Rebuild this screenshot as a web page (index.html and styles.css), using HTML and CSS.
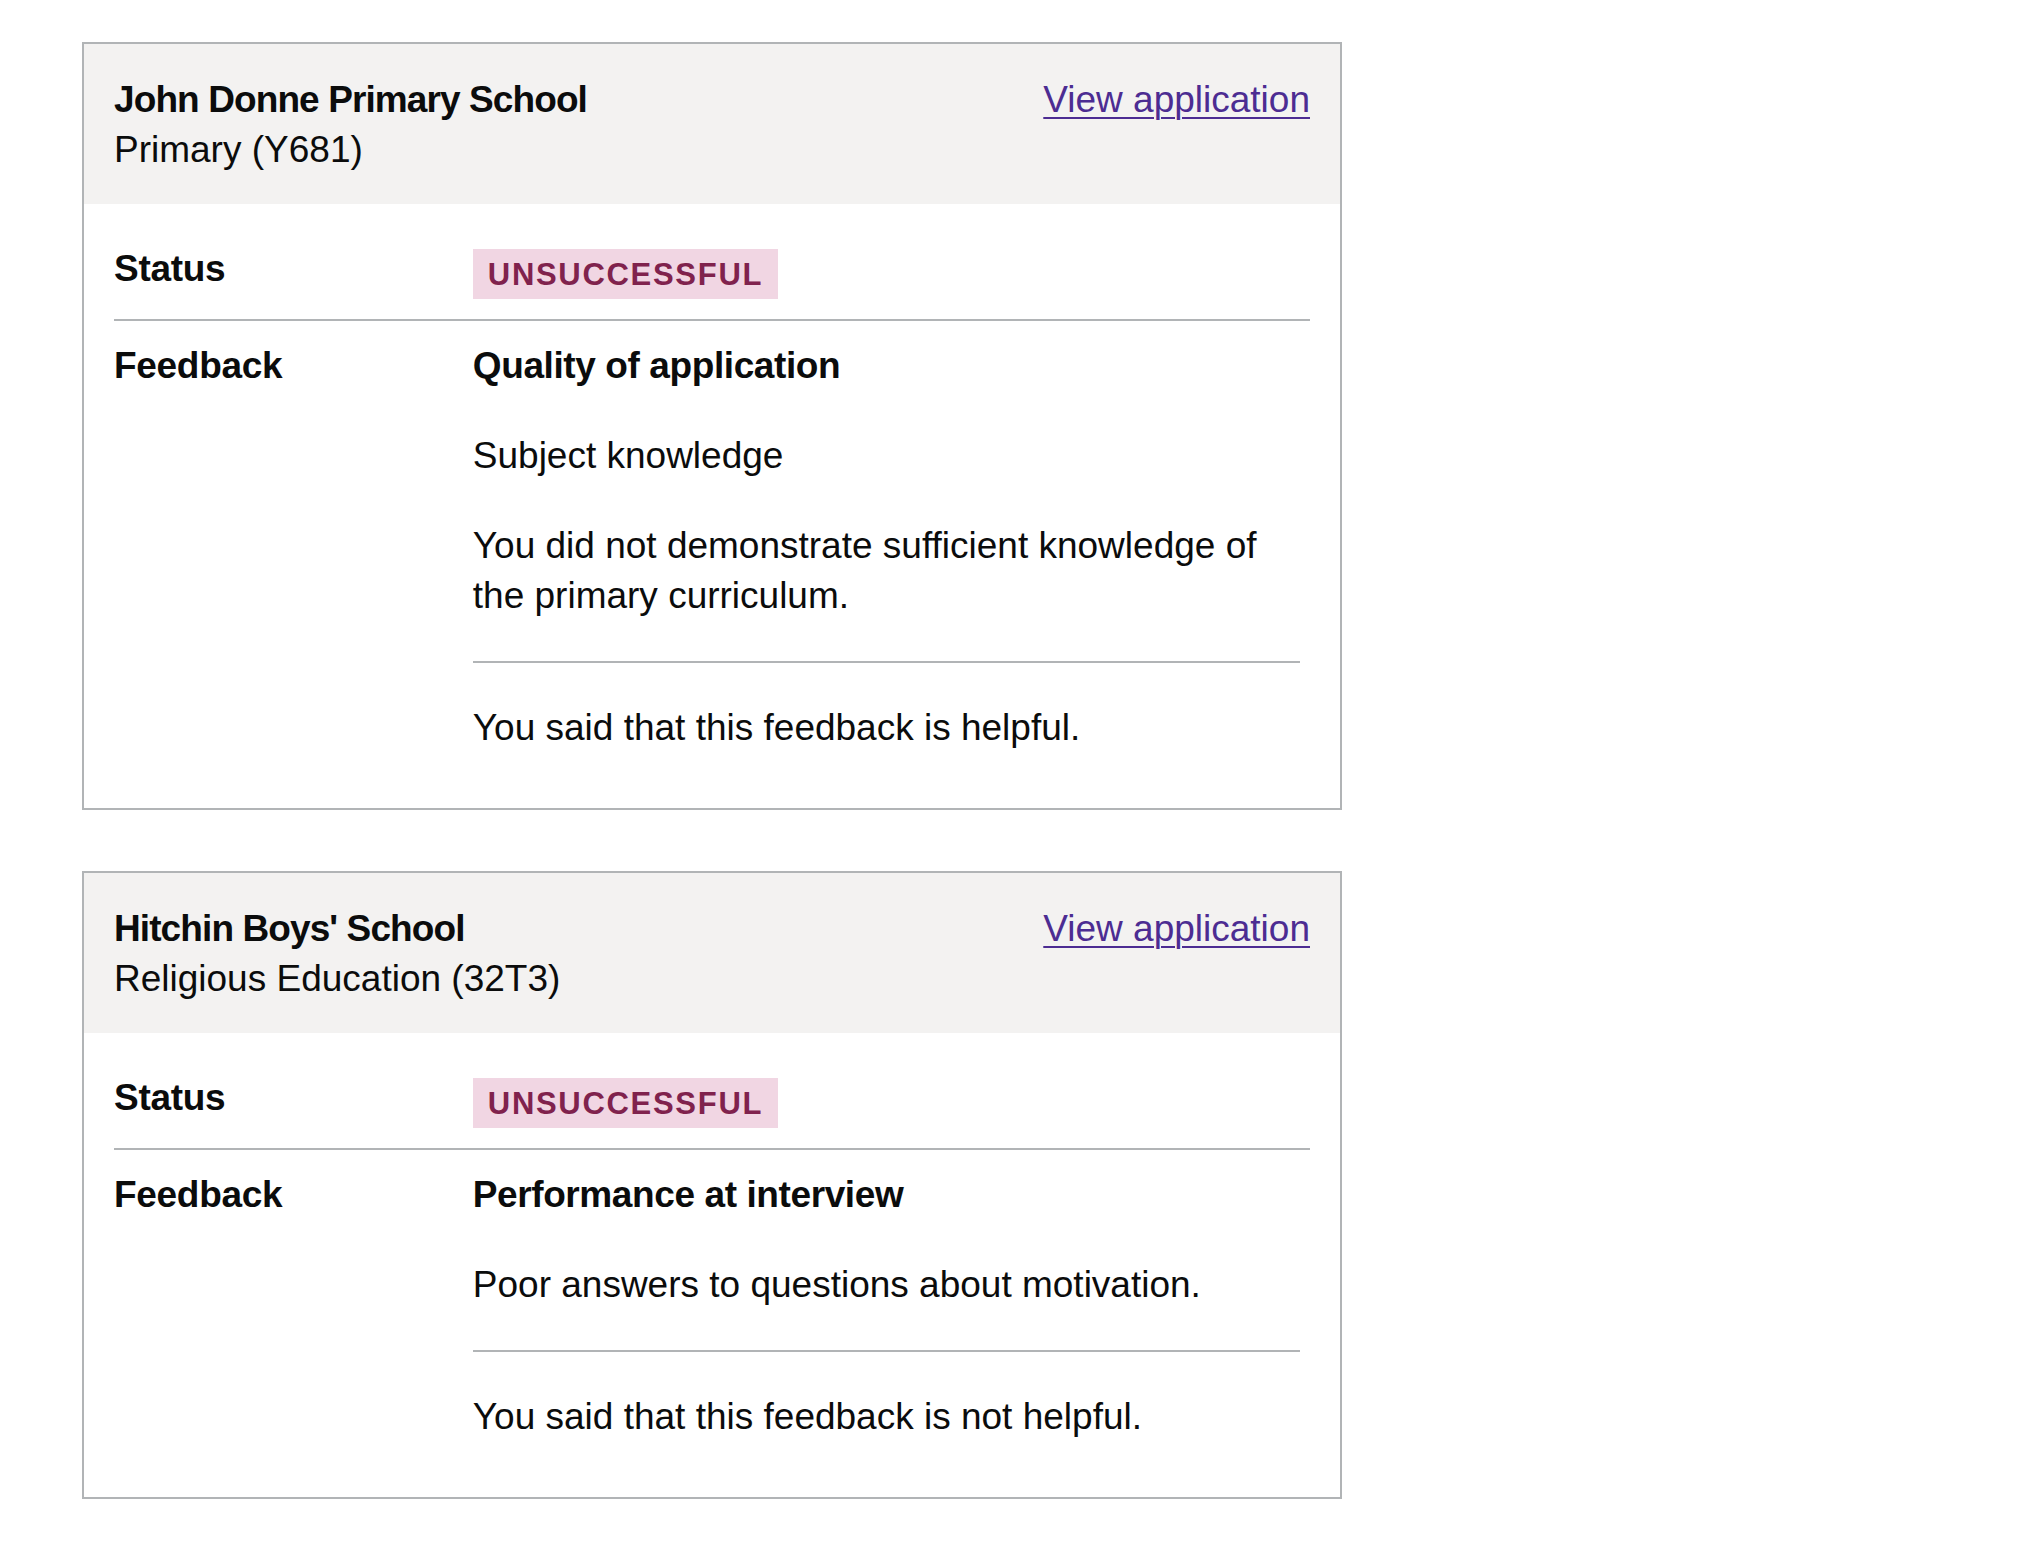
FILE: index.html
```html
<!DOCTYPE html>
<html lang="en">
<head>
<meta charset="utf-8">
<title>Application feedback</title>
<link rel="stylesheet" href="styles.css">
</head>
<body>
<main class="page">
  <section class="card">
    <header class="card-header">
      <div class="card-title-group">
        <h2 class="card-title">John Donne Primary School</h2>
        <p class="card-subtitle">Primary (Y681)</p>
      </div>
      <a class="card-link" href="#">View application</a>
    </header>
    <div class="card-content">
      <dl class="summary">
        <div class="summary-row">
          <dt class="summary-key">Status</dt>
          <dd class="summary-value"><strong class="tag">Unsuccessful</strong></dd>
        </div>
        <div class="summary-row">
          <dt class="summary-key">Feedback</dt>
          <dd class="summary-value">
            <p class="text text-bold">Quality of application</p>
            <p class="text">Subject knowledge</p>
            <p class="text">You did not demonstrate sufficient knowledge of the primary curriculum.</p>
            <hr class="break">
            <p class="text">You said that this feedback is helpful.</p>
          </dd>
        </div>
      </dl>
    </div>
  </section>

  <section class="card">
    <header class="card-header">
      <div class="card-title-group">
        <h2 class="card-title">Hitchin Boys' School</h2>
        <p class="card-subtitle">Religious Education (32T3)</p>
      </div>
      <a class="card-link" href="#">View application</a>
    </header>
    <div class="card-content">
      <dl class="summary">
        <div class="summary-row">
          <dt class="summary-key">Status</dt>
          <dd class="summary-value"><strong class="tag">Unsuccessful</strong></dd>
        </div>
        <div class="summary-row">
          <dt class="summary-key">Feedback</dt>
          <dd class="summary-value">
            <p class="text text-bold">Performance at interview</p>
            <p class="text">Poor answers to questions about motivation.</p>
            <hr class="break">
            <p class="text">You said that this feedback is not helpful.</p>
          </dd>
        </div>
      </dl>
    </div>
  </section>
</main>
</body>
</html>
```

FILE: styles.css
```css
* {
  box-sizing: border-box;
}

html, body {
  margin: 0;
  padding: 0;
  background: #ffffff;
}

body {
  font-family: "Liberation Sans", Arial, sans-serif;
  font-size: 37px;
  line-height: 50px;
  color: #0b0c0c;
}

.page {
  padding: 42px 0 40px 82px;
}

.card {
  width: 1260px;
  border: 2px solid #b1b4b6;
  margin-bottom: 61px;
}

.card-header {
  display: flex;
  justify-content: space-between;
  align-items: flex-start;
  background: #f3f2f1;
  padding: 31px 30px 29px 30px;
}

.card-title {
  margin: 0;
  font-size: 37px;
  line-height: 50px;
  font-weight: 700;
  letter-spacing: -0.9px;
}

.card-subtitle {
  margin: 0;
}

.card-link {
  color: #4c2c92;
  text-decoration: underline;
  text-decoration-thickness: 2px;
  text-underline-offset: 5px;
}

.card-content {
  padding: 20px 30px 35px 30px;
}

.summary {
  margin: 0;
}

.summary-row {
  display: grid;
  grid-template-columns: 30% 1fr;
  border-bottom: 2px solid #b1b4b6;
}

.summary-row:last-child {
  border-bottom: 0;
}

.summary-key {
  margin: 0;
  padding: 20px 20px 20px 0;
  font-weight: 700;
  letter-spacing: -0.3px;
}

.summary-value {
  margin: 0;
  padding: 20px 0;
}

.tag {
  display: inline-block;
  vertical-align: top;
  margin-top: 5px;
  padding: 10px 15px 9px 15px;
  font-size: 31px;
  line-height: 1;
  font-weight: 700;
  letter-spacing: 1.7px;
  text-transform: uppercase;
  color: #80224d;
  background: #f1d6e3;
}

.text {
  margin: 0 0 40px 0;
}

.text:last-child {
  margin-bottom: 0;
}

.text-bold {
  font-weight: 700;
  letter-spacing: -0.4px;
}

.break {
  height: 0;
  border: 0;
  border-top: 2px solid #b1b4b6;
  margin: 0 10px 40px 0;
}
```
